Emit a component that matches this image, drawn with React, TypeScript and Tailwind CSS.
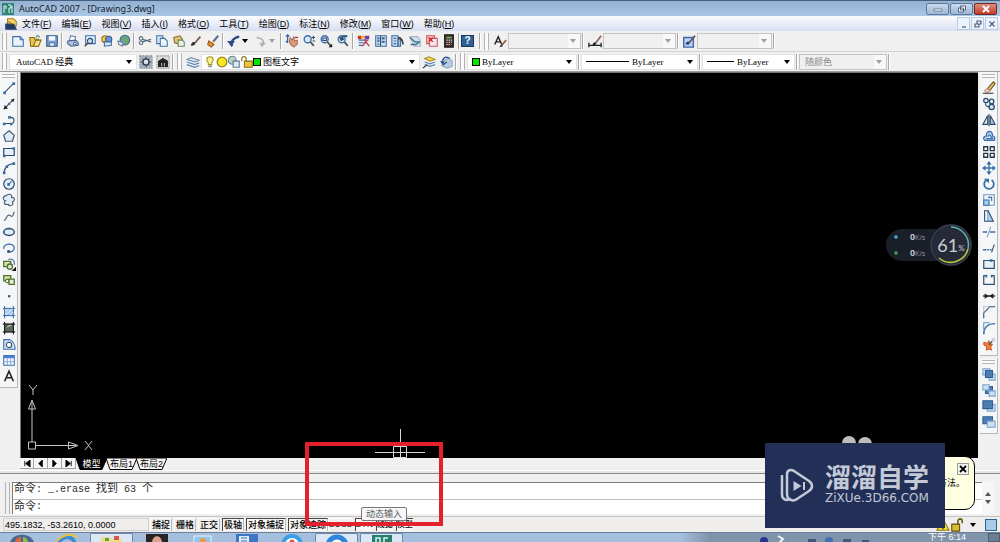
import type { ReactNode } from "react";
import clsx from "clsx";

type Tool = { label: string; art: ReactNode };

const NAVY = "#2b4a70";
const BLUE = "#3b6ea8";
const SKY = "#a9cbea";

const t = (label: string, art: ReactNode): Tool => ({ label, art });

function Art({ children, className }: { children: ReactNode; className?: string }) {
  return (
    <svg viewBox="0 0 16 16" fill="none" stroke={NAVY} strokeWidth="1.2" className={clsx("size-[14px] shrink-0", className)} aria-hidden="true">
      {children}
    </svg>
  );
}

const lens = (
  <>
    <circle cx="6.5" cy="6" r="4" fill="#d7e8f7" stroke={BLUE} strokeWidth="1.5" />
    <path d="M9.5 9l4 4.5" stroke="#555" strokeWidth="2" />
  </>
);

const fileTools = [
  t("新建", <><path d="M2 3h8.5L14 6.500V14H2z" fill="#eaf4fd" stroke={BLUE} /><path d="M10.500 3v3.500H14" stroke={BLUE} fill="#8fb9e0" /></>),
  t("打开", <><path d="M2 4h5l1 2h4v8H3z" fill="#e9c54a" stroke="#8a6a18" /><path d="M6 14l3-7h6l-3 7z" fill="#f8e08a" stroke="#8a6a18" /><path d="M9 4c1-3 4-2 4 0" stroke="#4a7b2d" /></>),
  t("保存", <><path d="M2 2h12v12H2z" fill="#7da4d6" stroke="#2c5387" /><path d="M4.500 2.500h7v5h-7z" fill="#f4f8fc" stroke="none" /><path d="M5 10h6v4H5z" fill="#dce8f4" stroke="#2c5387" strokeWidth=".8" /></>),
];
const plotTools = [
  t("打印", <><path d="M5 2l6 1-1 5H4z" fill="#fff" stroke="#6178a5" /><path d="M2 8l9-1 3 3v3l-8 1-4-3z" fill="#b4c3da" stroke="#4c5f86" /><circle cx="10" cy="11" r="1.500" fill="#fff" stroke={BLUE} /></>),
  t("打印预览", <><path d="M3 2h11v9H3z" fill="#e6f1fb" stroke={BLUE} /><circle cx="8" cy="8" r="3" fill="#c4ddf3" stroke={NAVY} /><path d="M6 10l-4 4" stroke="#555" strokeWidth="2" /></>),
  t("发布", <><circle cx="6" cy="6" r="4" fill="#f0ca45" stroke="#9b7520" /><circle cx="10" cy="6" r="3.500" fill="#6b94d2" stroke="#365a92" /><path d="M5 9h8v4l-8 1z" fill="#dbe7f5" stroke={BLUE} /></>),
  t("三维 DWF", <><circle cx="9" cy="7" r="5.500" fill="#5e9acb" stroke="#3f6f58" /><path d="M6 4c4 0 3 4 7 4M7 7c3-1 3 3 5 3" stroke="#6fac4c" strokeWidth="2.500" /><path d="M1 8l6 2-1 4-4-2z" fill="#dfe7f2" stroke="#718096" /></>),
];
const editTools = [
  t("剪切", <><path d="M5 6l10 3M15 6L5 9" stroke="#54657c" strokeWidth="1.400" /><circle cx="3.500" cy="10" r="2" stroke="#54657c" /><circle cx="3.500" cy="5" r="2" stroke="#54657c" /></>),
  t("复制", <><path d="M2 2h7v9H2z" fill="#dcebf8" stroke={BLUE} /><path d="M6 5h5l3 3v6H6z" fill="#eef6fd" stroke={BLUE} /></>),
  t("粘贴", <><path d="M2 4l7-2 3 4-2 6-7-2z" fill="#e4c570" stroke="#7e6a30" /><path d="M7 7h5l2 2v5H7z" fill="#e6f3e2" stroke="#688568" /></>),
  t("特性匹配", <><path d="M3 13c0-3 2-4 4-3l-1 2z" fill="#333" stroke="#333" /><path d="M7 10l6-7" stroke="#7b5a46" strokeWidth="2" /></>),
  t("块编辑器", <><path d="M8 9l6-7" stroke="#5c6f92" strokeWidth="2.500" /><path d="M3 8l6 4-3 3-4-3z" fill="#ee9434" stroke="#984f1c" /><path d="M7 8l2 2" stroke="#e8c04c" strokeWidth="2" /></>),
];
const zoomTools = [
  t("实时平移", <><path d="M5 8l1-4 2 3 2-4 1 5 3-1v5l-4 3-4-3z" fill="#d99a80" stroke="#94513c" strokeWidth=".9" /><path d="M3 1v9M1 3l2-2 2 2M1 8l2 2" stroke="#3c65a2" strokeWidth="1.500" /><path d="M11 4h4" stroke="#b52d2d" strokeWidth="1.500" /></>),
  t("实时缩放", <>{lens}<path d="M13 2v4M11 4h4M12 8h3" stroke={NAVY} /></>),
  t("窗口缩放", <>{lens}<path d="M4.500 4.500h4v3h-4z" stroke={NAVY} /><path d="M15 11v4h-4z" fill="#111" stroke="none" /></>),
  t("缩放上一个", <>{lens}<path d="M13 3c-3-2-6 0-7 3M4.500 3.500L6 7l3-1.500" stroke={NAVY} strokeWidth="1.800" /></>),
];
const paletteTools = [
  t("特性", <><path d="M1 2h4v4H1z" fill="#d72a2a" stroke="none" /><path d="M5 2h4v3H5z" fill="#e0b21c" stroke="none" /><path d="M9 2h5v4H9z" fill="#7e38a8" stroke="none" /><path d="M2 7h11M2 10h8M2 13h4" stroke="#3f69a8" /><path d="M8 6l6 8M12 7l-6 7" stroke="#ba4a68" strokeWidth="1.500" /></>),
  t("设计中心", <><path d="M2 2h12v12H2z" fill="#d7e6f5" stroke="#3a679b" /><path d="M4 4h2v2H4zM4 7h2v2H4zM4 11h2v1H4zM9 4h3v2H9zM9 8h3v2H9z" fill="#3a679b" stroke="#3a679b" strokeWidth=".4" /><path d="M7.500 2v12" /></>),
  t("工具选项板", <><path d="M1 2h7v12H1z" fill="#cfe0f1" stroke="#3a679b" /><path d="M3 5h3M3 8h3M3 11h3" stroke="#3a679b" /><path d="M8 6h3v8H8z" fill="#9ebbdc" stroke="#3a679b" /><path d="M8 4c4 0 5 3 6 8" stroke="#333" strokeWidth="1.600" /></>),
  t("图纸集管理器", <><path d="M2 3h9l3 4v7H7z" fill="#cfe0f1" stroke="#a3b5c8" /><path d="M2 4l6 5h6M3 12h6l4-3" stroke="#3f7184" strokeWidth="1.500" /></>),
  t("标记集管理器", <><path d="M2 2h9v9H2z" fill="#ffd8d8" stroke="#d04747" /><path d="M5 5h9v9H5z" fill="#f7e5ea" stroke="#c75773" /><path d="M4 4l5 5M9 4L4 9" stroke="#d21f1f" strokeWidth="1.500" /></>),
  t("快速计算器", <><path d="M3 1h10v14H3z" fill="#3b302e" stroke="#211b1a" /><path d="M5 3h6v2H5z" fill="#76b35d" stroke="none" /><path d="M5 7h1.500M7.500 7H9M10 7h1.500M5 9.500h1.500M7.500 9.500H9M10 9.500h1.500M5 12h1.500M7.500 12H9" stroke="#e8d9d3" /><path d="M10 12h1.500" stroke="#e22" /></>),
];

const drawTools = [
  t("直线", <><path d="M3 13L13 3" /><path d="M1.500 12h3v3h-3zM12 1.500h3v3h-3z" fill={BLUE} stroke="none" /></>),
  t("构造线", <><path d="M2 14L14 2" stroke="#222" /><path d="M2 14l1-5 4 4zM14 2l-1 4-3-3z" fill="#222" stroke="none" /><circle cx="8" cy="8" r="1.500" fill={BLUE} stroke="none" /></>),
  t("多段线", <><path d="M2 12h8c5 0 5-7 0-7H8" /><path d="M1 11h3v3H1zM9 11h3v3H9zM7 3.500h3v3H7z" fill={BLUE} stroke="none" /></>),
  t("正多边形", <path d="M8 2l6 5-2 7H4L2 7z" fill="#dcebf5" stroke="#46586d" strokeWidth="1.400" />),
  t("矩形", <><path d="M2 4h12v8H2z" fill="#e6f1fb" strokeWidth="1.400" /><path d="M1 11h3v3H1zM12 2.500h3v3h-3z" fill={BLUE} stroke="none" /></>),
  t("圆弧", <><path d="M2 14C3 7 7 3 14 3" /><path d="M1 12h3v3H1zM12 1.500h3v3h-3zM4 5h3v3H4z" fill={BLUE} stroke="none" /></>),
  t("圆", <><circle cx="8" cy="8" r="6" fill="#e2f0fb" strokeWidth="1.400" /><path d="M7 9l4-4" stroke={BLUE} /><path d="M6 7h3v3H6z" fill={BLUE} stroke="none" /></>),
  t("修订云线", <path d="M5 3c3-3 7-1 6 2 4 0 4 4 1 5 2 4-3 6-5 3-4 1-6-2-3-4-4-1-3-6 1-6z" fill="#e1eef8" stroke="#46586d" />),
  t("样条曲线", <path d="M2 13c3 1 3-7 6-6s4 4 6-4" stroke="#56687c" strokeWidth="1.400" />),
  t("椭圆", <><ellipse cx="8" cy="8" rx="6" ry="4" fill="#e1eef8" strokeWidth="1.600" /><path d="M7 3h2v2H7zM1 7h2v2H1z" fill={BLUE} stroke="none" /></>),
  t("椭圆弧", <><path d="M2 9c-1-7 12-7 12-1 0 4-4 5-7 4" stroke={BLUE} strokeWidth="1.500" /><path d="M6 10.500h3v3H6z" fill={NAVY} stroke="none" /></>),
  t("插入块", <><path d="M2 5h8v6H2z" fill="#d9e8a9" stroke="#53702b" strokeWidth="1.500" /><path d="M7 3c4-2 8 1 7 6" stroke={BLUE} /><circle cx="9" cy="11" r="3" fill="#d9ead0" stroke="#53702b" strokeWidth="1.500" /><path d="M16 11v5h-5z" fill="#111" stroke="none" /></>),
  t("创建块", <><path d="M2 3h8v6H2z" fill="#d9e8a9" stroke="#53702b" strokeWidth="1.500" /><circle cx="6" cy="9" r="2" fill="#fff" stroke="#53702b" /><path d="M8 7h6v6H8z" fill="#e4efdc" stroke="#53702b" strokeWidth="1.500" /></>),
  t("点", <path d="M7 7h2.500v2.500H7z" fill={NAVY} stroke="none" />),
  t("图案填充", <><path d="M4 3h9v10H4z" fill={SKY} stroke="none" /><path d="M3 1v14M13 1v14M1 4h14M1 12h14" stroke={BLUE} /><path d="M5 11l7-7M4 7l3-3M9 12l4-4" stroke="#fff" strokeWidth=".8" /></>),
  t("渐变色", <><path d="M3 3h10v10H3z" fill="#5e6c5c" stroke="none" /><path d="M3 1v14M13 1v14M1 3.500h14M1 12.500h14" stroke="#222" strokeWidth="1.400" /><path d="M5 8l3-4 4 1z" fill="#9fb39c" stroke="none" /></>),
  t("面域", <><path d="M2 3h7c4 2 6 5 6 11H2z" fill="#cfe1f2" stroke={BLUE} /><circle cx="8" cy="9" r="3" fill="#fff" stroke={NAVY} /></>),
  t("表格", <><path d="M2 3h12v11H2z" fill="#fff" stroke={BLUE} /><path d="M2 3h12v3H2z" fill="#4d7fd0" stroke="none" /><path d="M6 6v8M10 6v8M2 10h12" stroke="#83aadf" /></>),
  t("多行文字", <path d="M3 14L8 2.500 13 14M5 10h6" stroke="#222" strokeWidth="1.800" />),
];

const modifyTools = [
  t("删除", <><path d="M6 9l7-8 2 2-6 8z" fill="#e6c75b" stroke="#66562c" /><path d="M3 11l3-2 3 2-3 2z" fill="#f7eedd" stroke="#c98a7a" /><path d="M1 14h12" stroke="#333" /></>),
  t("复制对象", <><circle cx="4.500" cy="4" r="2.500" stroke={NAVY} strokeWidth="1.500" /><circle cx="11" cy="5" r="2.500" stroke={NAVY} strokeWidth="1.500" /><circle cx="11" cy="11.500" r="3" stroke={NAVY} strokeWidth="1.500" fill="#d1e3f4" /><path d="M4 7c0 3 1 4 4 4" /></>),
  t("镜像", <><path d="M6.500 3v10H1z" fill="#dbe9f6" /><path d="M9.500 3v10H15z" fill={SKY} /><path d="M8 1v14" stroke="#333" /></>),
  t("偏移", <><path d="M3 13c-3-3 0-5 2-5-1-7 8-7 7 0 3 0 3 3 2 5z" fill={SKY} stroke={BLUE} strokeWidth="1.400" /><path d="M5 11h7c0-2-1-2-2-2 0-3-3-3-3 0" stroke={BLUE} fill="#eaf3fb" /></>),
  t("阵列", <path d="M2 2h4.500v4.500H2zM9.500 2H14v4.500H9.500zM2 9.500h4.500V14H2zM9.500 9.500H14V14H9.500z" strokeWidth="1.500" stroke="#26384e" />),
  t("移动", <><path d="M8 2v12M2 8h12" stroke={BLUE} strokeWidth="1.600" /><path d="M8 0l3 4H5zM8 16l3-4H5zM0 8l4-3v6zM16 8l-4-3v6z" fill={BLUE} stroke="none" /></>),
  t("旋转", <><path d="M5 3.500a5.500 5.500 0 1 0 6 0" stroke={BLUE} strokeWidth="2" /><path d="M2 2h6v5z" fill={BLUE} stroke="none" /></>),
  t("缩放", <><path d="M2 2h12v12H2z" stroke="#7194b8" fill="#eef5fb" /><path d="M2 8h6v6H2z" fill={SKY} stroke={BLUE} /><path d="M7 5h4v4" stroke={BLUE} /></>),
  t("拉伸", <><path d="M3 2h4v12H3z" fill="#eef5fb" /><path d="M7 2l6 12H7" fill={SKY} /></>),
  t("修剪", <><path d="M1 8h5M9 8h6" stroke={BLUE} strokeWidth="1.500" /><path d="M10 2L6 14" stroke="#8ba3bb" /></>),
  t("延伸", <><path d="M1 10h4M6 10h2M9 10h2" stroke={BLUE} strokeWidth="1.500" /><path d="M14 4l-3 9" stroke={NAVY} /></>),
  t("打断于点", <><path d="M2 4h12v9H2z" fill="#e9f1f8" stroke="#34516f" strokeWidth="1.400" /><path d="M9 2.500h3v3H9z" fill={BLUE} stroke="none" /></>),
  t("打断", <><path d="M5 3H2v10h12V3h-3" strokeWidth="1.400" stroke="#34516f" /><path d="M4 2h2v3H4zM10 2h2v3h-2z" fill={BLUE} stroke="none" /></>),
  t("合并", <><path d="M1 8h14" stroke="#222" strokeWidth="1.500" /><path d="M3 5l5 3-5 3zM13 5L8 8l5 3z" fill="#222" stroke="none" /></>),
  t("倒角", <><path d="M2 15V9l7-7h6" /><path d="M2 9V2h7" stroke="#91aac5" strokeDasharray="2 1" /></>),
  t("圆角", <><path d="M2 15C2 7 7 3 15 3" stroke={BLUE} strokeWidth="1.700" /><path d="M2 10V2h7" stroke="#6f91b4" /></>),
  t("分解", <><path d="M2 6l4 1 2-3 1 4 3 0-2 4 1 3-3-1-3 1v-4l-3-2z" fill="#ef7e32" stroke="#b54217" strokeWidth=".8" /><path d="M8 9l5-6" stroke="#4a4a4a" strokeWidth="1.500" /><path d="M11 1h4v4h-4z" fill="#c9d3dd" stroke="none" /></>),
];

const orderTools = [
  t("前置", <><path d="M1 2h8v7H1z" fill="#c9dff2" stroke="#7da2c8" /><path d="M8 8h7v7H8z" fill="#c9dff2" stroke="#7da2c8" /><path d="M4 4h8v8H4z" fill="#4c7cb3" stroke="#315d92" /></>),
  t("后置", <><path d="M4 4h8v8H4z" fill="#4c7cb3" stroke="#315d92" /><path d="M1 2h7v6H1z" fill="#c9dff2" stroke="#7da2c8" /><path d="M8 9h7v6H8z" fill="#c9dff2" stroke="#7da2c8" /></>),
  t("置于对象之上", <><path d="M6 6h9v8H6z" fill="#c9dff2" stroke="#7da2c8" /><path d="M1 2h11v9H1z" fill="#4c7cb3" stroke="#315d92" /></>),
  t("置于对象之下", <><path d="M1 2h11v8H1z" fill="#4c7cb3" stroke="#315d92" /><path d="M6 7h9v7H6z" fill="#c9dff2" stroke="#7da2c8" /></>),
];

const menus = [
  ["文件", "F"], ["编辑", "E"], ["视图", "V"], ["插入", "I"], ["格式", "O"], ["工具", "T"],
  ["绘图", "D"], ["标注", "N"], ["修改", "M"], ["窗口", "W"], ["帮助", "H"],
];

const modes = [
  { name: "捕捉", on: false }, { name: "栅格", on: false }, { name: "正交", on: false },
  { name: "极轴", on: true }, { name: "对象捕捉", on: true }, { name: "对象追踪", on: true },
];

const displayModes = [
  { name: "DUCS", on: false }, { name: "DYN", on: true }, { name: "线宽", on: true }, { name: "模型", on: true },
];

function ToolButton({ tool }: { tool: Tool }) {
  return (
    <button type="button" title={tool.label} aria-label={tool.label} className="flex h-4 w-[17px] shrink-0 items-center justify-center">
      <Art>{tool.art}</Art>
    </button>
  );
}

function ToolGroup({ tools }: { tools: Tool[] }) {
  return <>{tools.map((tool) => <ToolButton key={tool.label} tool={tool} />)}</>;
}

function Sep() {
  return <div className="mx-px h-4 w-[2px] shrink-0 border-l border-[#a8a8a8] bg-white" />;
}

function Grip() {
  return <div className="mx-[2px] h-[17px] w-[5px] shrink-0 border-x border-[#b4b4b4] bg-[#fafafa]" />;
}

function GripFlat() {
  return <div className="my-[2px] h-1 w-[13px] shrink-0 border-y border-[#b4b4b4] bg-[#fafafa]" />;
}

function Caret({ dim }: { dim?: boolean }) {
  return (
    <svg viewBox="0 0 6 4" className={clsx("pointer-events-none mr-1 h-1 w-[6px] shrink-0", dim ? "fill-[#a0a0a0]" : "fill-black")} aria-hidden="true">
      <path d="M0 0h6L3 4z" />
    </svg>
  );
}

type ComboProps = { label: string; value: string; className: string; dim?: boolean; font?: string; lead?: ReactNode };

function Combo({ label, value, className, dim, font, lead }: ComboProps) {
  return (
    <div className={clsx("flex h-4 shrink-0 items-center border", dim ? "border-[#c4c4c4] bg-[#f0f0f0]" : "border-[#e2e2e2] bg-white", className)}>
      {lead}
      <select
        aria-label={label}
        disabled={dim}
        className={clsx("h-full min-w-0 flex-1 appearance-none bg-transparent text-[9px] leading-[14px] outline-none", font, dim ? "text-[#8a8a8a] opacity-100" : "text-black")}
      >
        <option>{value}</option>
      </select>
      <div className={clsx("flex h-full w-3 shrink-0 items-center justify-end", dim && "bg-[#f8f8f8]")}>
        <Caret dim={dim} />
      </div>
    </div>
  );
}

function WindowButtons() {
  return (
    <div className="flex gap-px">
      <button type="button" aria-label="最小化" className="flex h-3 w-[23px] items-center justify-center rounded-[2px] border border-[#5f7899] bg-linear-to-b from-[#cadbee] to-[#9bb7d6]">
        <svg viewBox="0 0 10 6" className="h-[6px] w-[10px]"><path d="M1 3h8v2H1z" fill="#fff" stroke="#51617a" strokeWidth=".7" /></svg>
      </button>
      <button type="button" aria-label="还原" className="flex h-3 w-[23px] items-center justify-center rounded-[2px] border border-[#5f7899] bg-linear-to-b from-[#cadbee] to-[#9bb7d6]">
        <svg viewBox="0 0 10 8" className="h-2 w-[10px]"><path d="M3.500 1h5v4h-5zM1.500 3h5v4h-5z" fill="#fff" stroke="#51617a" /></svg>
      </button>
      <button type="button" aria-label="关闭" className="flex h-3 w-[23px] items-center justify-center rounded-[2px] border border-[#6e2920] bg-linear-to-b from-[#e08c7c] to-[#c23a25]">
        <svg viewBox="0 0 8 8" className="size-2"><path d="M1 1l6 6M7 1L1 7" stroke="#fff" strokeWidth="2" /></svg>
      </button>
    </div>
  );
}

function TitleBar() {
  return (
    <header className="flex h-4 shrink-0 items-center gap-[5px] border-t border-[#46607f] bg-linear-to-b from-[#96b2d3] to-[#a9c6e4] pr-[3px] pl-[2px]">
      <svg viewBox="0 0 12 12" className="size-3 shrink-0"><path d="M0 0h12v12H0z" fill="#2f8377" /><path d="M2 10V3h2v3M6 2h3v3H7v5M10 3v7" stroke="#e9fbf6" fill="none" /></svg>
      <h1 className="flex-1 font-['Noto_Sans','Noto_Sans_CJK_SC',sans-serif] text-[9px] leading-3 text-[#16202c]">AutoCAD 2007 - [Drawing3.dwg]</h1>
      <WindowButtons />
    </header>
  );
}

function MenuBar() {
  return (
    <nav className="flex h-[15px] shrink-0 items-center bg-linear-to-b from-[#fbfcfe] to-[#d8def0] pr-[2px] pl-1">
      <Art className="mr-1"><path d="M4 2h7l3 3v5H4z" fill="#f6d660" stroke="#a77c20" /><path d="M2 8h9l3 6H2z" fill="#243a5d" /><path d="M5 5l4 3" stroke="#b56a22" /></Art>
      <div className="flex flex-1 gap-[10px]">
        {menus.map(([name, key]) => (
          <button key={key} type="button" className="text-[9px] leading-3 whitespace-nowrap">
            {name}(<span className="underline">{key}</span>)
          </button>
        ))}
      </div>
      <div className="flex gap-px">
        {[["最小化文档", "M2 7h4"], ["还原文档", "M3 1h4v3H3zM1 4h4v3H1z"], ["关闭文档", "M1.500 1.500l5 5M6.500 1.500l-5 5"]].map(([name, d]) => (
          <button key={name} type="button" aria-label={name} className="flex h-[13px] w-[13px] items-center justify-center border border-[#b9cbe4] bg-[#edf3fb]">
            <svg viewBox="0 0 8 8" className="size-2"><path d={d} stroke="#4b5d7c" strokeWidth="1.200" fill="none" /></svg>
          </button>
        ))}
      </div>
    </nav>
  );
}

function StandardBar() {
  return (
    <div className="flex h-[21px] shrink-0 items-center overflow-hidden border-b border-[#d2d2d2] bg-[#f0f0f0]">
      <Grip />
      <ToolGroup tools={fileTools} />
      <Sep />
      <ToolGroup tools={plotTools} />
      <Sep />
      <ToolGroup tools={editTools} />
      <Sep />
      <ToolButton tool={t("放弃", <><path d="M6 14c-3-4 1-10 8-11" stroke="#274b84" strokeWidth="2.500" /><path d="M0 8h9l-4 6z" fill="#274b84" stroke="none" /></>)} />
      <Caret />
      <ToolButton tool={t("重做", <><path d="M3 4c6 0 9 4 7 8" stroke="#b5b5b5" strokeWidth="2" /><path d="M6 10h8l-5 5z" fill="#b5b5b5" stroke="none" /></>)} />
      <Caret dim />
      <Sep />
      <ToolGroup tools={zoomTools} />
      <Sep />
      <ToolGroup tools={paletteTools} />
      <Sep />
      <button type="button" aria-label="帮助" className="flex h-3 w-[13px] shrink-0 items-center justify-center border border-[#16375e] bg-[#2e6195] text-[10px] leading-none font-bold text-white">?</button>
      <div className="w-1 shrink-0" />
      <Sep />
      <Grip />
      <ToolButton tool={t("文字样式", <><path d="M2 12L6 3l4 9M3.500 9h5" stroke="#222" strokeWidth="1.600" /><path d="M9 14l6-7" stroke="#9a5c3a" strokeWidth="2" /><path d="M7 15l3-3 1 2z" fill="#222" stroke="none" /></>)} />
      <Combo label="文字样式" value="" dim className="w-[73px]" />
      <Sep />
      <div className="w-px" />
      <ToolButton tool={t("标注样式", <><path d="M1 10v5M15 10v5M1 13h14" stroke="#222" strokeWidth="1.500" /><path d="M5 13c1-4 3-4 5-3l-2 3z" fill="#222" stroke="none" /><path d="M9 10l6-8" stroke="#8b6759" strokeWidth="2" /></>)} />
      <Combo label="标注样式" value="" dim className="w-[73px]" />
      <Sep />
      <ToolButton tool={t("表格样式", <><path d="M2 4h11v11H2z" fill="#bad1f0" stroke="#3c67ae" strokeWidth="1.600" /><path d="M4 12c1-4 3-4 5-3l-1 3z" fill="#223b66" stroke="none" /><path d="M8 10l7-8" stroke="#555" strokeWidth="2" /></>)} />
      <Combo label="表格样式" value="" dim className="w-[75px]" />
      <Sep />
    </div>
  );
}

const green = <span className="ml-1 size-2 shrink-0 border border-black bg-[#00e800]" />;

function LayerBar() {
  return (
    <div className="flex h-5 shrink-0 items-center overflow-hidden border-b border-[#9a9a9a] bg-[#f0f0f0]">
      <Grip />
      <Combo label="工作空间" value="AutoCAD 经典" className="w-32 pl-[6px]" font="font-['Liberation_Serif','Noto_Sans_CJK_SC',serif]" />
      <ToolButton tool={t("工作空间设置", <><path d="M1 1h14v14H1z" fill="#a9b9ce" stroke="#7f8894" strokeDasharray="2 1" /><circle cx="8" cy="8" r="3.500" fill="#d6e2ef" stroke="#333" strokeWidth="1.500" /><path d="M8 2v3M8 11v3M2 8h3M11 8h3M4 4l2 2M12 4l-2 2M4 12l2-2M12 12l-2-2" stroke="#444" /></>)} />
      <ToolButton tool={t("我的工作空间", <><path d="M1 1h14v14H1z" fill="#dcdcdc" stroke="#999" strokeDasharray="2 1" /><path d="M3 7l5-3 5 3v6H3z" fill="#222" stroke="#222" /><path d="M6 9h1v4H6zM9 9h1v4H9z" fill="#ccc" stroke="none" /></>)} />
      <Sep />
      <Grip />
      <ToolButton tool={t("图层特性管理器", <><path d="M1 5l5-2 9 3-5 2z" fill="#d6e3ef" stroke="#6f8aa6" /><path d="M1 8l9 3 5-2M1 11l9 3 5-2" stroke="#5a87b8" strokeWidth="1.500" /></>)} />
      <Combo
        label="图层"
        value="图框文字"
        className="w-[219px] pl-px"
        lead={
          <>
            <Art className="-mr-[2px]"><path d="M8 2c-5 0-4 5-2 7v2h4V9c2-2 3-7-2-7z" fill="#fbf08a" stroke="#a19122" /><path d="M6 12h4v2H6z" fill="#8195a5" stroke="none" /></Art>
            <Art className="-mr-[2px]"><circle cx="8" cy="8" r="5.500" fill="#f7e623" stroke="#93851a" strokeWidth="1.500" /></Art>
            <Art className="-mr-px"><circle cx="6" cy="6" r="4.500" fill="#b8d1cc" stroke="#66888f" /><path d="M7 7h7v7H7z" fill="#dfe9ef" stroke="#5c7694" /></Art>
            <Art className="-mr-[5px]"><path d="M2 7V4c0-3 5-3 5 0v3" stroke="#8a7d2d" strokeWidth="1.500" /><path d="M5 7h9v7H5z" fill="#e8c93b" stroke="#8a6d18" /></Art>
            {green}
            <span className="w-[2px]" />
          </>
        }
      />
      <ToolButton tool={t("将对象的图层置为当前", <><path d="M3 4l5-2 7 3-6 2z" fill="#f0d84e" stroke="#a48d24" /><path d="M3 8l6 2 6-2M3 11l6 2 6-2" stroke="#5a87b8" strokeWidth="1.500" /><path d="M1 15l5-4" stroke="#222" /></>)} />
      <ToolButton tool={t("上一个图层", <><path d="M7 6l4-3 4 4v6l-6 2-6-3z" fill="#b9cbe0" stroke="#8fa5c2" /><path d="M12 4C7 0 3 5 5 9M2 7l3 4 4-3" stroke="#274b84" strokeWidth="1.600" /></>)} />
      <Sep />
      <Grip />
      <Combo label="颜色" value="ByLayer" className="w-[110px]" font="font-['Liberation_Serif',serif]" lead={<>{green}<span className="w-[2px]" /></>} />
      <Sep />
      <Combo label="线型" value="ByLayer" className="w-[117px] pl-1" font="font-['Liberation_Serif',serif]" lead={<span className="mr-[3px] w-[43px] border-t border-black" />} />
      <Sep />
      <Combo label="线宽" value="ByLayer" className="w-[93px] pl-1" font="font-['Liberation_Serif',serif]" lead={<span className="mr-[3px] w-[27px] border-t border-black" />} />
      <Sep />
      <Combo label="打印样式" value="随颜色" dim className="w-[88px] pl-[5px]" />
      <Sep />
    </div>
  );
}

function SideBar({ groups }: { groups: Tool[][] }) {
  return (
    <aside className="flex w-[18px] shrink-0 flex-col gap-[2px]">
      {groups.map((group) => (
        <div key={group[0].label} className="flex flex-col items-center border-r border-b border-[#b8b8b8] bg-[#f4f6f8] pb-[3px]">
          <GripFlat />
          <ToolGroup tools={group} />
        </div>
      ))}
    </aside>
  );
}

function UcsIcon() {
  return (
    <svg viewBox="0 0 80 80" className="absolute bottom-0 left-0 size-20" stroke="#c4c4c4" fill="none" aria-label="UCS">
      <path d="M7.500 64h7v7h-7zM11 64V31M15 67.500h32" />
      <path d="M11 22l-3.500 9h7zM57 67.500L47.500 64v7zM11 24v7M47 67.500h8" />
      <path d="M8 7l4 5 4-5M12 12v5M64 63l7 9M71 63l-7 9" />
    </svg>
  );
}

function SpeedGadget() {
  return (
    <div className="absolute top-[151px] right-[6px] flex items-center text-[#c9ced6]">
      <div className="-mr-2 flex h-8 w-[52px] flex-col justify-center gap-[5px] rounded-l-full bg-[#1b1f2a] pl-[7px] font-['Liberation_Sans',sans-serif] text-[9px] leading-[10px]">
        {[["#4ba3d6", "上传"], ["#3f9d4c", "下载"]].map(([color, name]) => (
          <p key={name} className="flex items-center gap-[11px]">
            <svg viewBox="0 0 6 6" className="size-[6px]" aria-label={name}><path d="M3 1v4M1 3h4" stroke={color} strokeWidth="1.600" /></svg>
            <span><b>0</b><span className="text-[7px] text-[#8b919c]">K/s</span></span>
          </p>
        ))}
      </div>
      <div className="relative flex size-[42px] items-center justify-center rounded-full bg-[#262a36] font-['Lato',sans-serif]">
        <svg viewBox="0 0 42 42" className="absolute inset-0" fill="none" strokeWidth="1.500">
          <circle cx="21" cy="21" r="20" stroke="#3d4350" strokeWidth="1" />
          <path d="M21 3a18 18 0 0 1 17 22" stroke="#59b5ac" />
          <path d="M38 25A18 18 0 0 1 9 34" stroke="#b4cc3d" />
        </svg>
        <span className="text-[18px] leading-none">61</span>
        <span className="pt-[6px] text-[8px] leading-none">%</span>
      </div>
    </div>
  );
}

function Tab({ name, active }: { name: string; active?: boolean }) {
  return (
    <button type="button" className={clsx("relative -mr-px h-3 w-[31px] text-[9px] leading-3", active ? "text-white" : "text-black")}>
      <svg viewBox="0 0 31 12" className="absolute inset-0" stroke="#000">
        <path d="M0 0l4 11.500h22L31 0z" fill={active ? "#000" : "#f6f6f6"} />
      </svg>
      <span className="relative">{name}</span>
    </button>
  );
}

function Workspace() {
  return (
    <main className="flex min-w-0 flex-1 flex-col">
      <div className="relative min-h-[385px] flex-1 overflow-hidden border-t border-l border-[#777] bg-black">
        <UcsIcon />
        <svg viewBox="0 0 50 30" className="absolute bottom-0 left-[354px] h-[30px] w-[50px]" stroke="#d5d5d5" fill="none" aria-hidden="true">
          <path d="M25.500 1v28M0 24.500h50M18.500 18.500h13v11h-13z" />
        </svg>
        <SpeedGadget />
        <svg viewBox="0 0 30 20" className="absolute right-[106px] bottom-[2px] h-5 w-[30px]" fill="#bdbdbd" aria-hidden="true">
          <circle cx="7" cy="7" r="7" /><circle cx="23" cy="8" r="7" />
        </svg>
      </div>
      <div className="flex h-3 shrink-0 items-start bg-[#f0f0f0]">
        {["M2 1v6M8 0v8L3 4z", "M6 0v8L2 4z", "M2 0v8l4-4z", "M7 1v6M1 0v8l5-4z"].map((d, i) => (
          <button key={d} type="button" aria-label={["第一个", "上一个", "下一个", "最后一个"][i]} className="flex h-[11px] w-[14px] items-center justify-center border-r border-b border-[#a5a5a5] bg-[#f6f6f6]">
            <svg viewBox="0 0 9 8" className="h-[7px] w-2" stroke="#000" strokeWidth="1"><path d={d} /></svg>
          </button>
        ))}
        <Tab name="模型" active />
        <Tab name="布局1" />
        <Tab name="布局2" />
      </div>
    </main>
  );
}

function CommandLine() {
  return (
    <section className="flex shrink-0 border-t border-[#8a8a8a] bg-[#f0f0f0] pt-2 pr-[6px] pb-[2px] pl-[3px] font-['Liberation_Mono','Noto_Sans_CJK_SC',monospace] text-[10px] text-[#2a2a2a]">
      <div className="mx-[2px] w-[5px] border-x border-[#b4b4b4]" />
      <div className="min-w-0 flex-1 border-t border-l border-[#7d7d7d] bg-white">
        <p className="h-[17px] border-b border-[#bdbdbd] pl-px leading-3">
          <span className="text-[11px]">命令</span>: _.erase <span className="text-[11px]">找到</span> 63 <span className="text-[11px]">个</span>
        </p>
        <label className="flex h-[14px] items-center pl-px leading-3">
          <span className="text-[11px]">命令</span>:
          <input className="ml-1 h-3 min-w-0 flex-1 bg-transparent outline-none" />
        </label>
      </div>
      <div className="flex w-3 flex-col items-center justify-center gap-1 bg-[#f6f6f6]">
        <svg viewBox="0 0 6 4" className="h-1 w-[6px] fill-[#555]"><path d="M0 4h6L3 0z" /></svg>
        <svg viewBox="0 0 6 4" className="h-1 w-[6px] fill-[#555]"><path d="M0 0h6L3 4z" /></svg>
      </div>
    </section>
  );
}

function ModeButton({ name, on, tight }: { name: string; on: boolean; tight?: boolean }) {
  return (
    <button
      type="button"
      aria-pressed={on}
      className={clsx("h-[13px] border-t border-l font-medium whitespace-nowrap", on ? "border-[#444] bg-[#f8f7f6]" : "border-white", tight ? "text-[8px]" : "border-r border-r-[#bbb] px-px")}
    >
      {name}
    </button>
  );
}

function StatusBar() {
  return (
    <div className="flex h-4 shrink-0 items-center border-t border-[#c4c4c4] bg-[#f0eeec] pr-[3px] pl-[3px] text-[9px] leading-3">
      <output className="h-[13px] w-[146px] shrink-0 border border-[#d0d0d0] pl-px">495.1832, -53.2610, 0.0000</output>
      <div className="flex gap-[2px] pl-px">
        {modes.map((mode) => <ModeButton key={mode.name} {...mode} />)}
      </div>
      <div className="flex flex-1 gap-[3px]">
        {displayModes.map((mode) => <ModeButton key={mode.name} {...mode} tight />)}
      </div>
      <Art><path d="M8 1l7 13H1z" fill="#f2dc2a" stroke="#8c7b12" /><path d="M8 5v5M8 11v2" stroke="#222" /></Art>
      <Art><path d="M9 8V4c0-4 5-4 5 0v2" stroke="#6b5a14" strokeWidth="1.800" /><path d="M2 7h9v8H2z" fill="#d9bd2f" stroke="#5f4d0d" /></Art>
      <div className="ml-[6px] flex"><Caret /></div>
      <button type="button" aria-label="全屏显示" className="ml-[5px] size-3 border border-[#315f8f] bg-[#a9cbea]" />
    </div>
  );
}

function TaskItem({ label, active, children }: { label: string; active?: boolean; children: ReactNode }) {
  return (
    <button type="button" aria-label={label} className={clsx("flex h-full w-[43px] items-start justify-center overflow-hidden", active && "rounded-t-[2px] border-x border-t border-[#6e87a6] bg-[#dbe7f4]")}>
      <svg viewBox="0 0 24 10" className="h-[10px] w-6" aria-hidden="true">{children}</svg>
    </button>
  );
}

function TaskBar() {
  return (
    <footer className="flex h-[10px] shrink-0 gap-[2px] overflow-hidden border-t border-[#6d7f98] bg-linear-to-r from-[#a5bfdf] from-68% to-[#7f93ab] to-71%">
      <TaskItem label="开始"><path d="M0 10C2-1 22-1 24 10z" fill="#49698e" /><path d="M5 10c0-4 3-6 6-6v6z" fill="#e0623a" /><path d="M13 4c3 0 5 3 5 6h-5z" fill="#8dbb4b" /></TaskItem>
      <TaskItem label="Internet Explorer"><path d="M4 12a8 8 0 0 1 16 0" fill="none" stroke="#3e8ed0" strokeWidth="4" /><path d="M2 8C8 1 18 0 22 5" fill="none" stroke="#e9c23e" strokeWidth="2" /></TaskItem>
      <TaskItem label="资源管理器" active><path d="M1 3h8l2 2h11v5H1z" fill="#f1dc86" /><path d="M5 4h4v3H5z" fill="#5aa04d" /><path d="M14 2h5v4h-5z" fill="#d6564a" /></TaskItem>
      <TaskItem label="照片"><path d="M1 1h22v9H1z" fill="#2b2224" /><path d="M7 10c0-9 10-9 10 0z" fill="#d9a68c" /></TaskItem>
      <TaskItem label="图片"><path d="M4 3h17v7H4z" fill="#8fc6ee" stroke="#e9f3fb" /><circle cx="13" cy="8" r="3" fill="#ef9843" /></TaskItem>
      <TaskItem label="文档"><path d="M1 1h22v9H1z" fill="#3d77c2" /><path d="M4 3h10v7H4z" fill="#dce9f7" /><path d="M6 5h6M6 8h6" stroke="#3d77c2" /></TaskItem>
      <TaskItem label="播放器"><path d="M3 12a9 9 0 0 1 18 0" fill="#fff" stroke="#38a0e4" strokeWidth="4" /><circle cx="12" cy="9" r="2.500" fill="#e35045" /></TaskItem>
      <TaskItem label="浏览器" active><path d="M3 12a9 9 0 0 1 18 0" fill="#fff" stroke="#2b86dc" strokeWidth="5" /></TaskItem>
      <TaskItem label="AutoCAD" active><path d="M2 1h20v9H2z" fill="#22806c" /><path d="M6 10V4h4v6M14 10V4h4" stroke="#dff5ee" fill="none" strokeWidth="1.500" /></TaskItem>
      <svg viewBox="0 0 140 10" className="ml-auto h-[10px] w-[140px]" aria-hidden="true">
        <circle cx="6" cy="8" r="4" fill="#24358f" /><path d="M20 3l5 3-4 4" stroke="#eef3f8" fill="none" strokeWidth="2" /><path d="M50 6h8v4h-8zM85 6h8v4h-8zM104 7h7v3h-7z" fill="#3d5778" /><circle cx="71" cy="8" r="4" fill="#3f72b0" />
      </svg>
      <time className="ml-7 text-[9px] leading-[9px] whitespace-nowrap text-white">下午 6:14</time>
      <button type="button" aria-label="显示桌面" className="ml-5 w-3 border border-[#4f5f74] bg-[#6b7d93]" />
    </footer>
  );
}

function Balloon() {
  return (
    <div role="status" className="absolute right-[25px] bottom-8 h-[54px] w-[120px] rounded-[10px] border border-black bg-[#ffffe1] text-[9px] leading-3">
      <button type="button" aria-label="关闭提示" className="absolute top-[6px] right-[5px] flex size-3 items-center justify-center border border-[#999] bg-[#f4f4ee]">
        <svg viewBox="0 0 8 8" className="size-2"><path d="M1 1l6 6M7 1L1 7" stroke="#000" strokeWidth="1.800" /></svg>
      </button>
      <p className="pt-5 pr-[9px] text-right">方法。</p>
    </div>
  );
}

function Watermark() {
  return (
    <div className="absolute right-[55px] bottom-[14px] flex h-[85px] w-[180px] items-center gap-[10px] bg-[#222f56] pl-[14px] text-[#c3c9d6]">
      <svg viewBox="0 0 36 36" className="size-9 shrink-0" fill="none" stroke="#c3c9d6" strokeWidth="2.500" strokeLinejoin="round" aria-hidden="true">
        <path d="M12 30.500c-4 3-9 1-9-4V7" />
        <path d="M8 26V6c0-4 4-5 7-3l15 10c4 3 4 7 0 10L18 31c-4 3-10 1-10-5z" />
        <path d="M14.500 13v10l8-5z" fill="#c3c9d6" stroke="none" /><path d="M25 14v8" strokeWidth="2" />
      </svg>
      <div className="pb-1 whitespace-nowrap">
        <p className="text-[26px] leading-7 font-bold">溜溜自学</p>
        <p className="font-['DejaVu_Sans',sans-serif] text-[12px] leading-3">ZiXUe.3D66.COM</p>
      </div>
    </div>
  );
}

export default function App() {
  return (
    <div className="relative flex min-h-screen w-full flex-col overflow-hidden bg-[#f0f0f0] font-['Liberation_Sans','Noto_Sans_CJK_SC',sans-serif] text-black">
      <TitleBar />
      <MenuBar />
      <StandardBar />
      <LayerBar />
      <div className="flex flex-1 gap-[2px] pr-[2px]">
        <SideBar groups={[drawTools]} />
        <Workspace />
        <SideBar groups={[modifyTools, orderTools]} />
      </div>
      <div className="h-[3px] shrink-0 border-t border-white bg-[#e6e6e6]" />
      <CommandLine />
      <StatusBar />
      <TaskBar />
      <Balloon />
      <div className="pointer-events-none absolute bottom-4 left-[305px] h-[84px] w-[138px] border-4 border-[#e3202b]" />
      <div role="tooltip" className="absolute bottom-[21px] left-[361px] rounded-[2px] border border-[#777] bg-[#f7f7fa] px-1 text-[9px] leading-3 text-[#555]">动态输入</div>
      <Watermark />
    </div>
  );
}
